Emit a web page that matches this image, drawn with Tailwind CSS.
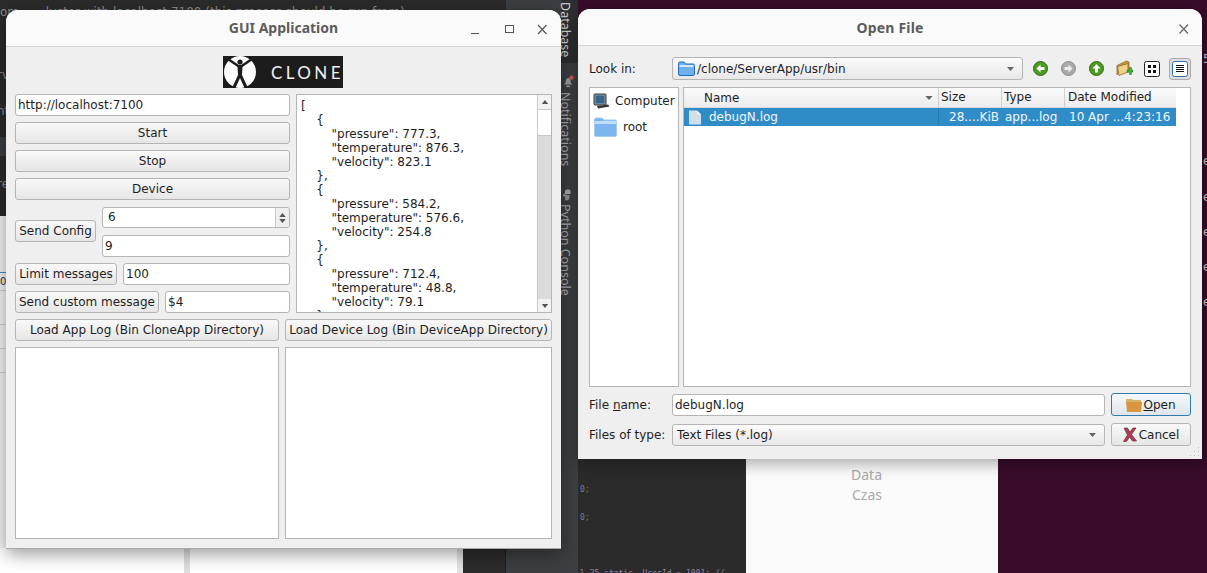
<!DOCTYPE html>
<html lang="en">

<head>
    <meta charset="UTF-8">
    <title>GUI Application</title>
    <script src="https://cdn.jsdelivr.net/npm/@tailwindcss/browser@4"></script>
</head>

<body class="bg-[#380c2a] overflow-hidden font-['DejaVu_Sans',sans-serif] text-[12px] text-[#1e1e1e]">
    <div class="relative w-[1207px] h-[573px] overflow-hidden">

        <!-- desktop behind the windows -->
        <div class="absolute left-0 top-0 w-[506px] h-[216px] bg-[#2b2b2b] text-[#8d8d8d] text-[12px]">
            <p class="absolute left-0 top-[5px] leading-[14px] whitespace-pre">om       luster with localhost:7100 (this process should be run from)</p>
            <p class="absolute left-[-3px] top-[66px]">rv</p>
            <p class="absolute left-[-3px] top-[102px]">nt</p>
            <div class="absolute left-0 top-[137px] w-[6px] h-[19px] bg-[#3c3f41]"></div>
            <p class="absolute left-[-3px] top-[175px]">re</p>
        </div>
        <div class="absolute left-[506px] top-0 w-[55px] h-[573px] bg-[#3c3f41]"></div>
        <div class="absolute left-0 top-[216px] w-[6px] h-[357px] bg-[#f4f4f4]">
            <div class="h-[57px] border-b border-[#4a88c7]"></div>
            <div class="h-[18px] border-b border-[#cfcfcf] text-[10px] leading-[18px] text-[#333]">0</div>
            <div class="h-[34px] border-b border-[#cfcfcf]"></div>
            <div class="h-[24px] border-b border-[#cfcfcf]"></div>
            <div class="h-[24px] border-b border-[#cfcfcf]"></div>
        </div>
        <div class="absolute left-0 top-[548px] w-[184px] h-[25px] bg-white"></div>
        <div class="absolute left-[184px] top-[548px] w-[6px] h-[25px] bg-[#dedede]"></div>
        <div class="absolute left-[190px] top-[548px] w-[267px] h-[25px] bg-white"></div>
        <div class="absolute left-[457px] top-[548px] w-[6px] h-[25px] bg-[#e2e2e2]"></div>
        <div class="absolute left-[463px] top-[548px] w-[42px] h-[25px] bg-[#2b2b2b]"></div>

        <!-- tool strip between the windows -->
        <div class="absolute left-[561px] top-0 w-[17px] h-[573px] bg-[#3c3f41] text-[#a9adb0] font-['Noto_Sans',sans-serif] text-[12.5px]">
            <div class="absolute left-0 top-0 w-[17px] h-[63px] bg-[#2d2f30]"></div>
            <p class="absolute left-[-4px] top-[2px] [writing-mode:vertical-rl] text-[#d8dadc] leading-[17px]">Database</p>
            <svg class="absolute left-[1px] top-[74px]" width="13" height="15" viewBox="0 0 15 15">
                <path d="M2 11c2-1 2-3 2.500-5 .5-2 2-3 3.500-2.500 1.500.5 2 2 2 4 0 1.500 1 2.500 2 3.500z" fill="#9a9da0" />
                <rect x="5" y="12" width="4" height="2" fill="#9a9da0" />
                <circle cx="11" cy="3" r="2.500" fill="#d9534f" />
            </svg>
            <p class="absolute left-[-4px] top-[92px] [writing-mode:vertical-rl] leading-[17px]">Notifications</p>
            <svg class="absolute left-[1px] top-[189px]" width="12" height="12" viewBox="0 0 12 12">
                <path d="M3 5V2.500C3 1 4.500 .5 6 .5S8.500 1 8.500 2.500V5H4.500v.8H7c-2 0-4 0-4-.8z" fill="#a9adb0" />
                <path d="M1 6.500C1 5 2 4.500 3 4.500V6h4.500V8.500C7.500 10 6.500 11.500 5 11.500S3 10.500 3 9.500V7.500C2 7.500 1 7.500 1 6.500z" fill="#8d9093" />
            </svg>
            <p class="absolute left-[-4px] top-[204px] [writing-mode:vertical-rl] leading-[17px]">Python Console</p>
        </div>

        <!-- areas under and beside the dialog -->
        <div class="absolute left-[578px] top-[459px] w-[168px] h-[114px] bg-[#2b2b2b] font-['DejaVu_Sans_Mono',monospace] text-[8px]">
            <p class="absolute left-[2px] top-[25px]"><span class="text-[#6d7f9c]">0</span><span class="text-[#a5652f]">;</span></p>
            <p class="absolute left-[2px] top-[53px]"><span class="text-[#6d7f9c]">0</span><span class="text-[#a5652f]">;</span></p>
            <p class="absolute left-[2px] top-[109px] whitespace-pre text-[#8f83a8]">l 25 static  UserId = 1001; //</p>
        </div>
        <div class="absolute left-[746px] top-[459px] w-[252px] h-[114px] bg-[#fafafa] text-[#a9a9a9] text-[14px] font-['Noto_Sans',sans-serif]">
            <p class="absolute right-[116px] top-[5px]">Data</p>
            <p class="absolute right-[116px] top-[25px]">Czas</p>
        </div>
        <div class="absolute left-[1203px] top-[45px] w-[4px] h-[270px] text-[#cfc4cb] text-[12px]">
            <p class="absolute left-0 top-[5px]">5</p>
            <p class="absolute left-0 top-[107px]">e</p>
            <p class="absolute left-0 top-[143px]">e</p>
            <p class="absolute left-0 top-[178px]">e</p>
            <p class="absolute left-0 top-[213px]">e</p>
            <p class="absolute left-0 top-[248px]">e</p>
        </div>

        <!-- GUI Application window -->
        <div class="absolute left-[6px] top-[10px] w-[555px] h-[539px] rounded-t-[12px] bg-[#efefef] shadow-[0_5px_18px_rgba(0,0,0,0.4)] border-b border-[#a8a8a8]">
            <div class="relative h-[37px] rounded-t-[12px] bg-[#fafafa] border-b border-[#d4d4d4] flex items-center justify-center">
                <span class="font-['Noto_Sans',sans-serif] font-bold text-[14px] text-[#5c5c5c] -mt-[1px]">GUI Application</span>
                <svg class="absolute left-[464px] top-[13px]" width="80" height="14" viewBox="0 0 80 14" fill="none" stroke="#555" stroke-width="1">
                    <path d="M1 10.500H9" />
                    <rect x="35.500" y="2.500" width="8" height="7" />
                    <path d="M68 2l8.500 9M76.500 2L68 11" stroke-width="1.200" />
                </svg>
            </div>
            <div class="px-[9px] pt-[9px]">
                <div class="ml-[208px] w-[120px] h-[32px] bg-[#1c1c1c] flex items-center overflow-hidden">
                    <svg class="shrink-0 ml-[1px]" width="32" height="32" viewBox="0 0 32 32">
                        <circle cx="16" cy="16" r="16" fill="#fff" />
                        <circle cx="16" cy="6" r="2.600" fill="#1c1c1c" />
                        <path d="M4 3L15 10.500H17L28 3M16 9V19" stroke="#1c1c1c" stroke-width="2.400" fill="none" />
                        <path d="M13.500 10h5L18 19l6 13h-3.500L16 22l-4.500 10H8l6-13z" fill="#1c1c1c" />
                    </svg>
                    <span class="ml-[15px] font-['Lato',sans-serif] text-[17px] tracking-[3.4px] text-[#f2f2f2] leading-none whitespace-nowrap">CLONE</span>
                </div>

                <div class="mt-[6px] flex gap-[6px]">
                    <div class="w-[275px] flex flex-col">
                        <div class="h-[22px] bg-white border border-[#b5b5b5] rounded-[3px] px-[2px] leading-[20px]">http://localhost:7100</div>
                        <button class="mt-[6px] h-[22px] bg-linear-to-b from-[#f9f9f9] to-[#e6e6e6] border border-[#b5b5b5] rounded-[3px]">Start</button>
                        <button class="mt-[6px] h-[22px] bg-linear-to-b from-[#f9f9f9] to-[#e6e6e6] border border-[#b5b5b5] rounded-[3px]">Stop</button>
                        <button class="mt-[6px] h-[22px] bg-linear-to-b from-[#f9f9f9] to-[#e6e6e6] border border-[#b5b5b5] rounded-[3px]">Device</button>
                        <div class="mt-[7px] flex items-center gap-[6px]">
                            <button class="w-[81px] h-[22px] mt-[-2px] bg-linear-to-b from-[#f9f9f9] to-[#e6e6e6] border border-[#b5b5b5] rounded-[3px]">Send Config</button>
                            <div class="flex-1 flex flex-col gap-[7px]">
                                <div class="h-[21px] bg-white border border-[#b5b5b5] rounded-[3px] flex">
                                    <span class="flex-1 pl-[5px] leading-[19px]">6</span>
                                    <span class="w-[14px] border-l border-[#c8c8c8] bg-[#efefef] rounded-r-[3px] flex flex-col items-center justify-center gap-[2px]">
                                        <svg width="7" height="4" viewBox="0 0 8 5"><path d="M0 5L4 0l4 5z" fill="#555" /></svg>
                                        <svg width="7" height="4" viewBox="0 0 8 5"><path d="M0 0l4 5 4-5z" fill="#555" /></svg>
                                    </span>
                                </div>
                                <div class="h-[22px] bg-white border border-[#b5b5b5] rounded-[3px] px-[2px] leading-[20px]">9</div>
                            </div>
                        </div>
                        <div class="mt-[6px] flex gap-[6px]">
                            <button class="w-[102px] h-[22px] bg-linear-to-b from-[#f9f9f9] to-[#e6e6e6] border border-[#b5b5b5] rounded-[3px]">Limit messages</button>
                            <div class="flex-1 h-[22px] bg-white border border-[#b5b5b5] rounded-[3px] px-[2px] leading-[20px]">100</div>
                        </div>
                        <div class="mt-[6px] flex gap-[6px]">
                            <button class="w-[144px] h-[22px] bg-linear-to-b from-[#f9f9f9] to-[#e6e6e6] border border-[#b5b5b5] rounded-[3px]">Send custom message</button>
                            <div class="flex-1 h-[22px] bg-white border border-[#b5b5b5] rounded-[3px] px-[2px] leading-[20px]">$4</div>
                        </div>
                    </div>

                    <div class="w-[256px] h-[219px] bg-white border border-[#b5b5b5] flex overflow-hidden">
                        <pre class="flex-1 pl-[4px] pt-[4px] font-['DejaVu_Sans',sans-serif] text-[12px] leading-[14px] overflow-hidden">[
    {
        "pressure": 777.3,
        "temperature": 876.3,
        "velocity": 823.1
    },
    {
        "pressure": 584.2,
        "temperature": 576.6,
        "velocity": 254.8
    },
    {
        "pressure": 712.4,
        "temperature": 48.8,
        "velocity": 79.1
    },</pre>
                        <div class="w-[14px] border-l border-[#c8c8c8] bg-[#dcdcdc] flex flex-col">
                            <div class="h-[14px] bg-[#f2f2f2] flex items-center justify-center">
                                <svg width="8" height="4" viewBox="0 0 8 5"><path d="M0 5L4 0l4 5z" fill="#555" /></svg>
                            </div>
                            <div class="h-[27px] bg-white border-y border-[#c8c8c8]"></div>
                            <div class="flex-1"></div>
                            <div class="h-[13px] bg-[#f2f2f2] flex items-center justify-center">
                                <svg width="8" height="4" viewBox="0 0 8 5"><path d="M0 0l4 5 4-5z" fill="#555" /></svg>
                            </div>
                        </div>
                    </div>
                </div>

                <div class="mt-[6px] flex gap-[6px]">
                    <button class="w-[264px] h-[22px] bg-linear-to-b from-[#f9f9f9] to-[#e6e6e6] border border-[#b5b5b5] rounded-[3px] whitespace-nowrap">Load App Log (Bin CloneApp Directory)</button>
                    <button class="w-[267px] h-[22px] bg-linear-to-b from-[#f9f9f9] to-[#e6e6e6] border border-[#b5b5b5] rounded-[3px] whitespace-nowrap">Load Device Log (Bin DeviceApp Directory)</button>
                </div>
                <div class="mt-[6px] flex gap-[6px]">
                    <div class="w-[264px] h-[192px] bg-white border border-[#b5b5b5]"></div>
                    <div class="w-[267px] h-[192px] bg-white border border-[#b5b5b5]"></div>
                </div>
            </div>
        </div>

        <!-- Open File dialog -->
        <div class="absolute left-[578px] top-[9px] w-[624px] h-[450px] rounded-t-[12px] bg-[#efefef] shadow-[0_4px_16px_rgba(0,0,0,0.35)]">
            <div class="relative h-[37px] rounded-t-[12px] bg-[#fafafa] border-b border-[#d4d4d4] flex items-center justify-center">
                <span class="font-['Noto_Sans',sans-serif] font-bold text-[14px] tracking-[0.2px] text-[#5c5c5c]">Open File</span>
                <svg class="absolute left-[600px] top-[14px]" width="12" height="12" viewBox="0 0 12 12" fill="none" stroke="#666" stroke-width="1.200">
                    <path d="M1.500 1.500l8.500 9M10 1.500l-8.500 9" />
                </svg>
            </div>

            <div class="px-[11px] pt-[11px]">
                <div class="flex items-center h-[23px]">
                    <span class="w-[83px] pt-[1px]">Look in:</span>
                    <div class="w-[351px] h-[23px] bg-linear-to-b from-[#fbfbfb] to-[#e8e8e8] border border-[#b5b5b5] rounded-[3px] flex items-center pl-[5px] pr-[8px]">
                        <svg width="17" height="15" viewBox="0 0 17 15">
                            <path d="M.5 2.500Q.5 1 2 1h4l1.500 2H15q1.500 0 1.500 1.500V13q0 1.500-1.500 1.500H2Q.5 14.500 .5 13z" fill="#6fb0ec" stroke="#1d6fc4" />
                            <rect x="1.500" y="4" width="14" height="2" fill="#d5e8fa" />
                        </svg>
                        <span class="ml-[2px] flex-1 pt-[1px]">/clone/ServerApp/usr/bin</span>
                        <svg width="7" height="4" viewBox="0 0 9 5"><path d="M0 0h9L4.500 5z" fill="#666" /></svg>
                    </div>
                    <div class="ml-[3px] flex items-center">
                        <span class="w-[28px] h-[23px] flex items-center justify-center">
                            <svg width="15" height="15" viewBox="0 0 15 15">
                                <circle cx="7.500" cy="7.500" r="7" fill="#4c9a22" stroke="#2f6b12" />
                                <path d="M7.500 3.500L3.500 7.500l4 4V9h4V6h-4z" fill="#fff" />
                            </svg>
                        </span>
                        <span class="w-[28px] h-[23px] flex items-center justify-center">
                            <svg width="15" height="15" viewBox="0 0 15 15">
                                <circle cx="7.500" cy="7.500" r="7" fill="#a9a9a9" stroke="#8c8c8c" />
                                <path d="M7.500 3.500l4 4-4 4V9h-4V6h4z" fill="#eee" />
                            </svg>
                        </span>
                        <span class="w-[28px] h-[23px] flex items-center justify-center">
                            <svg width="15" height="15" viewBox="0 0 15 15">
                                <circle cx="7.500" cy="7.500" r="7" fill="#4c9a22" stroke="#2f6b12" />
                                <path d="M7.500 3L3.500 7.500H6v4h3v-4h2.500z" fill="#fff" />
                            </svg>
                        </span>
                        <span class="w-[28px] h-[23px] flex items-center justify-center">
                            <svg width="17" height="17" viewBox="0 0 17 17">
                                <path d="M1 5.500L10.500 1 13 2V12H3.500L1 15z" fill="#c99a45" stroke="#8f6b24" stroke-width=".8" />
                                <path d="M1.500 6.500L12 3.500V12L3 15.500z" fill="#f0d08a" stroke="#8f6b24" stroke-width=".8" />
                                <path d="M11 10h2.500V7.500h2V10H17v2h-1.500v2.500h-2V12H11z" fill="#3fae3a" stroke="#237a20" stroke-width=".5" />
                            </svg>
                        </span>
                        <span class="w-[28px] h-[23px] flex items-center justify-center">
                            <svg width="16" height="16" viewBox="0 0 16 16">
                                <rect x=".5" y=".5" width="15" height="15" rx="2" fill="#fff" stroke="#222" />
                                <rect x="4" y="4" width="3" height="3" fill="#111" />
                                <rect x="9" y="4" width="3" height="3" fill="#111" />
                                <rect x="4" y="9" width="3" height="3" fill="#111" />
                                <rect x="9" y="9" width="3" height="3" fill="#111" />
                            </svg>
                        </span>
                        <span class="w-[22px] h-[22px] ml-[3px] bg-[#dcdcdc] border border-[#aaa] rounded-[3px] flex items-center justify-center">
                            <svg width="16" height="16" viewBox="0 0 16 16">
                                <rect x=".5" y=".5" width="15" height="15" rx="2" fill="#fff" stroke="#2a6fb0" />
                                <path d="M4 4.500h8M4 6.500h8M4 8.500h8M4 10.500h8" stroke="#111" />
                            </svg>
                        </span>
                    </div>
                </div>

                <div class="mt-[7px] flex gap-[4px] h-[300px]">
                    <div class="w-[90px] bg-white border border-[#b5b5b5]">
                        <div class="flex items-center h-[20px] mt-[3px] pl-[3px]">
                            <svg width="17" height="17" viewBox="0 0 17 17">
                                <rect x="1" y="1" width="12" height="11" rx="1" fill="#8aa0b2" stroke="#333" />
                                <rect x="2.500" y="2.500" width="9" height="8" fill="#3a6488" />
                                <path d="M4 13l11-1.500 1.500 2L5 15.500z" fill="#333" />
                            </svg>
                            <span class="ml-[5px]">Computer</span>
                        </div>
                        <div class="flex items-center h-[24px] mt-[4px] pl-[4px]">
                            <svg width="23" height="20" viewBox="0 0 23 20">
                                <path d="M.5 3Q.5 1 2 1h6l2 2h11q1.500 0 1.500 1.500V18q0 1.500-1.500 1.500H2Q.5 19.500 .5 18z" fill="#7db5ee" stroke="#a5ccf2" />
                                <rect x="1" y="4" width="21" height="3" fill="#c3ddf7" />
                            </svg>
                            <span class="ml-[6px]">root</span>
                        </div>
                    </div>

                    <div class="w-[508px] bg-white border border-[#b5b5b5]">
                        <div class="flex h-[20px] w-[492px] bg-linear-to-b from-[#fbfbfb] to-[#ececec] border-b border-[#d8d8d8] leading-[18px]">
                            <div class="w-[255px] pl-[20px] border-r border-[#d0d0d0] flex items-center justify-between pr-[5px]">
                                <span>Name</span>
                                <svg width="8" height="4" viewBox="0 0 9 5"><path d="M0 0h9L4.500 5z" fill="#666" /></svg>
                            </div>
                            <div class="w-[63px] pl-[2px] border-r border-[#d0d0d0]">Size</div>
                            <div class="w-[63px] pl-[2px] border-r border-[#d0d0d0]">Type</div>
                            <div class="flex-1 pl-[3px]">Date Modified</div>
                        </div>
                        <div class="flex h-[18px] w-[492px] bg-[#308cc6] text-[#f2f7fb] leading-[18px]">
                            <div class="w-[255px] pl-[4px] flex items-center border-r border-[#2a7bb0]">
                                <svg width="14" height="15" viewBox="0 0 14 15">
                                    <path d="M1 .5h8l4 4v10H1z" fill="#cfe0ec" />
                                    <path d="M9 .5v4h4" fill="#eef5fa" />
                                </svg>
                                <span class="ml-[7px]">debugN.log</span>
                            </div>
                            <div class="w-[63px] pl-[10px]">28....KiB</div>
                            <div class="w-[63px] pl-[3px]">app...log</div>
                            <div class="flex-1 pl-[4px] whitespace-nowrap">10 Apr ...4:23:16</div>
                        </div>
                    </div>
                </div>

                <div class="mt-[6px] flex items-center h-[23px]">
                    <span class="w-[83px] pt-[1px]">File <span class="underline">n</span>ame:</span>
                    <div class="w-[433px] h-[22px] bg-white border border-[#b5b5b5] rounded-[3px] px-[2px] leading-[20px]">debugN.log</div>
                    <button class="ml-[6px] w-[80px] h-[23px] bg-linear-to-b from-[#f4f8fb] to-[#dfe6eb] border border-[#2f7cb0] rounded-[3px] flex items-center justify-center">
                        <svg width="16" height="15" viewBox="0 0 16 15">
                            <path d="M0 2h6l1 1h8v3H0z" fill="#d9b36a" />
                            <path d="M0 5h16l-1 10H1z" fill="#d9953f" />
                        </svg>
                        <span class="ml-[1px]"><span class="underline">O</span>pen</span>
                    </button>
                </div>
                <div class="mt-[7px] flex items-center h-[23px]">
                    <span class="w-[83px] pt-[1px]">Files of type:</span>
                    <div class="w-[433px] h-[22px] bg-linear-to-b from-[#fbfbfb] to-[#e8e8e8] border border-[#b5b5b5] rounded-[3px] flex items-center justify-between pl-[4px] pr-[8px]">
                        <span class="pt-[1px]">Text Files (*.log)</span>
                        <svg width="7" height="4" viewBox="0 0 9 5"><path d="M0 0h9L4.500 5z" fill="#666" /></svg>
                    </div>
                    <button class="ml-[6px] w-[80px] h-[23px] bg-linear-to-b from-[#f9f9f9] to-[#e6e6e6] border border-[#b5b5b5] rounded-[3px] flex items-center justify-center">
                        <svg width="14" height="15" viewBox="0 0 14 15">
                            <path d="M1 1h3.500L7 5l3-4h3L8.500 7.500 13.500 14H9.500L6.500 10 3.500 14.500H.5L4.500 8z" fill="#a93f52" stroke="#6e2b36" stroke-width=".7" />
                        </svg>
                        <span class="ml-[2px]">Cancel</span>
                    </button>
                </div>
            </div>
            <svg class="absolute right-[2px] bottom-[2px]" width="11" height="11" viewBox="0 0 11 11" fill="#c4c4c4">
                <rect x="9" y="1" width="1" height="1" />
                <rect x="5" y="5" width="1" height="1" />
                <rect x="9" y="5" width="1" height="1" />
                <rect x="1" y="9" width="1" height="1" />
                <rect x="5" y="9" width="1" height="1" />
                <rect x="9" y="9" width="1" height="1" />
            </svg>
        </div>
    </div>
</body>

</html>
